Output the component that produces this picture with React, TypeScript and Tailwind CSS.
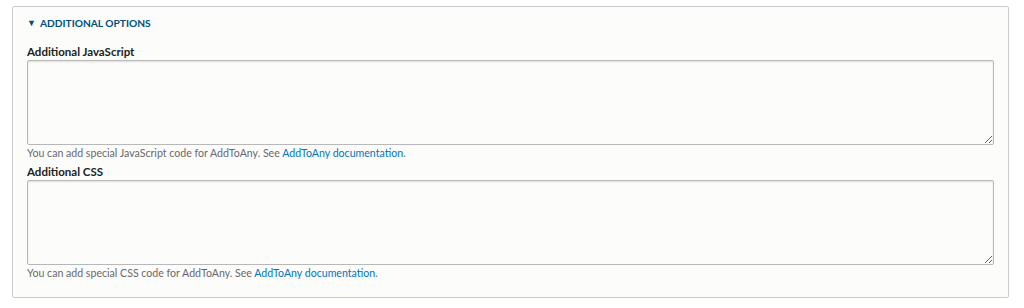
export default function App() {
  const fields = [
    { label: "Additional JavaScript", what: "JavaScript" },
    { label: "Additional CSS", what: "CSS" },
  ];

  return (
    <div className="w-[1024px] h-[308px] bg-white pt-[6px] pl-[12px] font-['Lato',sans-serif]">
      <div className="w-[997px] h-[292px] border border-[#cccccc] rounded-[2px] bg-[#fcfcfa]">
        {/* Legend */}
        <div className="h-[37px] pl-[14px] pt-[9px] flex items-start">
          <div className="flex items-center gap-[4px] h-[14px] text-[10.2px] font-bold uppercase text-[#004f80] leading-[14px]">
            <span className="text-[9px]">▼</span>
            <span>Additional options</span>
          </div>
        </div>

        <div className="px-[14px]">
          {fields.map((f, i) => (
            <div key={f.what} className={i > 0 ? "mt-[3px]" : ""}>
              <label className="block h-[16px] leading-[16px] text-[11.5px] font-bold text-[#222222]">
                {f.label}
              </label>
              <textarea
                className="block w-[967px] h-[85px] border border-[#b8b8b8] rounded-[2px] bg-[#fcfcfa] shadow-[inset_0_1px_2px_rgba(0,0,0,0.12)] resize-y outline-none"
              />
              <div className="h-[16px] leading-[16px] text-[10.6px] text-[#68696b]">
                You can add special {f.what} code for AddToAny. See{" "}
                <a href="#" className="text-[#0074bd]">
                  AddToAny documentation
                </a>
                .
              </div>
            </div>
          ))}
        </div>
      </div>
    </div>
  );
}
